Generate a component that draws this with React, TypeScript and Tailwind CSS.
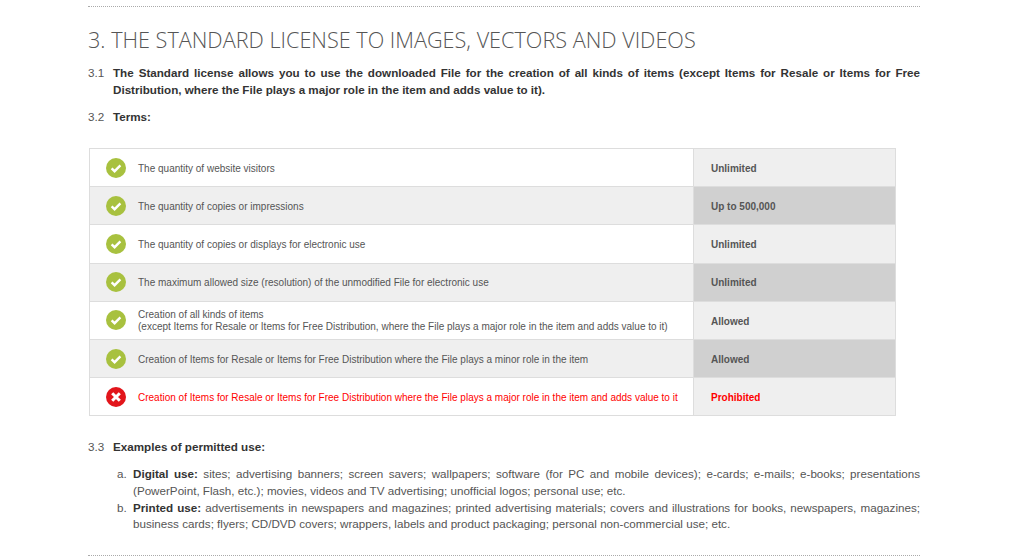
import React from 'react'

interface Term {
  label: React.ReactNode
  value: string
  ok?: boolean
}

const terms: Term[] = [
  { label: 'The quantity of website visitors', value: 'Unlimited' },
  { label: 'The quantity of copies or impressions', value: 'Up to 500,000' },
  { label: 'The quantity of copies or displays for electronic use', value: 'Unlimited' },
  { label: 'The maximum allowed size (resolution) of the unmodified File for electronic use', value: 'Unlimited' },
  {
    label: (
      <>
        Creation of all kinds of items
        <br />
        (except Items for Resale or Items for Free Distribution, where the File plays a major role in the item and adds value to it)
      </>
    ),
    value: 'Allowed',
  },
  { label: 'Creation of Items for Resale or Items for Free Distribution where the File plays a minor role in the item', value: 'Allowed' },
  { label: 'Creation of Items for Resale or Items for Free Distribution where the File plays a major role in the item and adds value to it', value: 'Prohibited', ok: false },
]

const CheckIcon = () => (
  <svg className="h-5 w-5 shrink-0" viewBox="0 0 20 20">
    <circle cx="10" cy="10" r="10" fill="#a8c13f" />
    <path d="M5.6 10.3l3 2.9 5.8-5.8" fill="none" stroke="#fff" strokeWidth="2.4" />
  </svg>
)

const CrossIcon = () => (
  <svg className="h-5 w-5 shrink-0" viewBox="0 0 20 20">
    <circle cx="10" cy="10" r="10" fill="#e2151b" />
    <path d="M6.2 6.2l7.6 7.6M13.8 6.2l-7.6 7.6" fill="none" stroke="#fff" strokeWidth="3" />
  </svg>
)

const App = () => {
  return (
    <div className="h-[556px] overflow-hidden bg-white font-['Liberation_Sans',Arial,sans-serif] text-[#555]">
      <div className="ml-[88px] w-[832px] pt-[6px]">
        <div className="border-t border-dotted border-[#aaa]" />

        <h2 className="mt-[18px] font-['Open_Sans',sans-serif] text-[21.65px] leading-[30px] font-light text-[#555]">
          3. THE STANDARD LICENSE TO IMAGES, VECTORS AND VIDEOS
        </h2>

        <div className="mt-[9px] flex text-[11.65px] leading-[17px]">
          <span className="w-[25px] shrink-0">3.1</span>
          <p className="text-justify font-bold text-[#333]">
            The Standard license allows you to use the downloaded File for the creation of all kinds of items (except Items for Resale or Items for Free Distribution, where the File plays a major role in the item and adds value to it).
          </p>
        </div>

        <div className="mt-[10px] flex text-[11.65px] leading-[17px]">
          <span className="w-[25px] shrink-0">3.2</span>
          <p className="font-bold text-[#333]">Terms:</p>
        </div>

        <div className="mt-[23px] ml-px w-[807px] border border-[#ddd]">
          {terms.map((term, i) => {
            const odd = i % 2 === 1
            const bad = term.ok === false
            return (
              <div
                key={i}
                className={`flex items-stretch ${i > 0 ? 'h-[38.2px] border-t border-[#ddd]' : 'h-[37.2px]'} ${odd ? 'bg-[#efefef]' : 'bg-white'}`}
              >
                <div className={`flex flex-1 items-center gap-[12px] pl-[16px] text-[10px] leading-[12px] ${bad ? 'text-[#f00]' : ''}`}>
                  {bad ? <CrossIcon /> : <CheckIcon />}
                  <span className="pt-[2px]">{term.label}</span>
                </div>
                <div
                  className={`flex w-[202px] items-center border-l border-[#ddd] pt-[1.5px] pl-[17px] text-[10px] font-bold ${odd ? 'bg-[#d0d0d0]' : 'bg-[#efefef]'} ${bad ? 'text-[#f00]' : ''}`}
                >
                  {term.value}
                </div>
              </div>
            )
          })}
        </div>

        <div className="mt-[22px] flex text-[11.65px] leading-[17px]">
          <span className="w-[25px] shrink-0">3.3</span>
          <p className="font-bold text-[#333]">Examples of permitted use:</p>
        </div>

        <ol className="mt-[11px] text-[11.65px] leading-[16.67px]">
          <li className="flex">
            <span className="w-[45px] shrink-0 pl-[29px]">a.</span>
            <p className="text-justify">
              <b className="text-[#333]">Digital use:</b> sites; advertising banners; screen savers; wallpapers; software (for PC and mobile devices); e-cards; e-mails; e-books; presentations (PowerPoint, Flash, etc.); movies, videos and TV advertising; unofficial logos; personal use; etc.
            </p>
          </li>
          <li className="flex">
            <span className="w-[45px] shrink-0 pl-[29px]">b.</span>
            <p className="text-justify">
              <b className="text-[#333]">Printed use:</b> advertisements in newspapers and magazines; printed advertising materials; covers and illustrations for books, newspapers, magazines; business cards; flyers; CD/DVD covers; wrappers, labels and product packaging; personal non-commercial use; etc.
            </p>
          </li>
        </ol>

        <div className="mt-[22px] border-t border-dotted border-[#aaa]" />
      </div>
    </div>
  )
}

export default App
